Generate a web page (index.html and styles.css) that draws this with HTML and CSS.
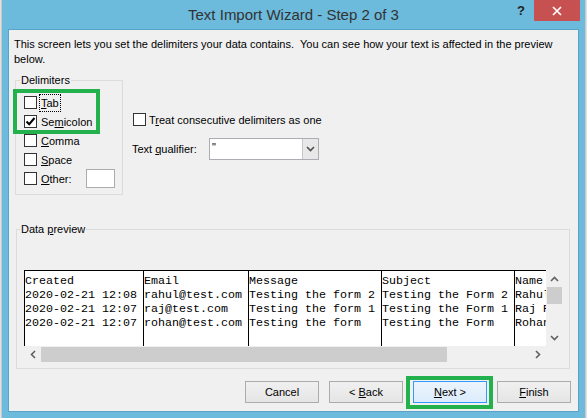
FILE: index.html
```html
<!DOCTYPE html>
<html>
<head>
<meta charset="utf-8">
<title>Text Import Wizard</title>
<link rel="stylesheet" href="styles.css">
</head>
<body>
<div class="screen">
  <div class="edge"></div>
  <div class="window">
    <div class="titlebar">
      <div></div>
      <div class="title">Text Import Wizard - Step 2 of 3</div>
      <div class="caption-btns">
        <span class="help">?</span>
        <span class="close"><svg width="10" height="10" viewBox="0 0 10 10"><path d="M1 1L9 9M9 1L1 9" stroke="#fff" stroke-width="1.7" fill="none"/></svg></span>
      </div>
    </div>
    <div class="frame">
      <div class="client">
        <p class="intro">This screen lets you set the delimiters your data contains.&nbsp; You can see how your text is affected in the preview<br>below.</p>
        <div class="top-row">
          <fieldset class="group delims">
            <legend>Delimiters</legend>
            <div class="hl">
              <div class="row"><span class="cb"></span><span class="lbl focus"><u>T</u>ab</span></div>
              <div class="row"><span class="cb"><svg width="11" height="11" viewBox="0 0 11 11"><path d="M1.5 5.5L4.2 8.2L9.5 2" stroke="#000" stroke-width="2" fill="none"/></svg></span><span class="lbl">Se<u>m</u>icolon</span></div>
            </div>
            <div class="row"><span class="cb"></span><span class="lbl"><u>C</u>omma</span></div>
            <div class="row"><span class="cb"></span><span class="lbl"><u>S</u>pace</span></div>
            <div class="row"><span class="cb"></span><span class="lbl"><u>O</u>ther:</span><span class="textbox"></span></div>
          </fieldset>
          <div class="options">
            <div class="row"><span class="cb"></span><span class="lbl">T<u>r</u>eat consecutive delimiters as one</span></div>
            <div class="qual">
              <span class="qlabel">Text <u>q</u>ualifier:</span>
              <div class="select">
                <span class="val">"</span>
                <span class="dd"><svg width="9" height="6" viewBox="0 0 9 6"><path d="M1 1L4.5 4.5L8 1" stroke="#505050" stroke-width="1.6" fill="none"/></svg></span>
              </div>
            </div>
          </div>
        </div>
        <fieldset class="group preview-group">
          <legend>Data <u>p</u>review</legend>
          <div class="preview">
            <div class="table">
              <div class="col c1">Created
2020-02-21 12:08
2020-02-21 12:07
2020-02-21 12:07</div>
              <div class="col c2">Email
rahul@test.com
raj@test.com
rohan@test.com</div>
              <div class="col c3">Message
Testing the form 2
Testing the form 1
Testing the form</div>
              <div class="col c4">Subject
Testing the Form 2
Testing the Form 1
Testing the Form</div>
              <div class="col c5">Name
Rahul
Raj Rao
Rohan</div>
            </div>
            <div class="vscroll">
              <span class="sbtn"><svg width="9" height="6" viewBox="0 0 9 6"><path d="M1 5L4.5 1.5L8 5" stroke="#606060" stroke-width="1.6" fill="none"/></svg></span>
              <span class="vthumb"></span>
              <span class="vspace"></span>
              <span class="sbtn"><svg width="9" height="6" viewBox="0 0 9 6"><path d="M1 1L4.5 4.5L8 1" stroke="#606060" stroke-width="1.6" fill="none"/></svg></span>
            </div>
            <div class="hscroll">
              <span class="sbtn"><svg width="6" height="9" viewBox="0 0 6 9"><path d="M5 1L1.5 4.5L5 8" stroke="#606060" stroke-width="1.6" fill="none"/></svg></span>
              <span class="hthumb"></span>
              <span class="hspace"></span>
              <span class="sbtn"><svg width="6" height="9" viewBox="0 0 6 9"><path d="M1 1L4.5 4.5L1 8" stroke="#606060" stroke-width="1.6" fill="none"/></svg></span>
            </div>
            <div class="corner"></div>
          </div>
        </fieldset>
        <div class="buttons">
          <button class="btn">Cancel</button>
          <button class="btn">&lt; <u>B</u>ack</button>
          <button class="btn next"><u>N</u>ext &gt;</button>
          <button class="btn"><u>F</u>inish</button>
        </div>
      </div>
    </div>
  </div>
  <div class="edge"></div>
</div>
</body>
</html>
```

FILE: styles.css
```css
* { box-sizing: border-box; }
html, body { margin: 0; padding: 0; }
body {
  width: 587px;
  height: 418px;
  overflow: hidden;
  background: #e1e1e1;
  font-family: "Liberation Sans", Arial, sans-serif;
  font-size: 11px;
  color: #000;
}
.screen { display: flex; height: 418px; }
.edge { width: 2px; flex: none; background: #e1e1e1; border-right: 1px solid #c9c9c9; }
.edge:last-child { border-right: none; border-left: 1px solid #c9c9c9; }
.window {
  width: 583px;
  flex: none;
  background: #6cbadc;
  display: flex;
  flex-direction: column;
}
.titlebar {
  height: 29px;
  display: grid;
  grid-template-columns: 1fr auto 1fr;
  align-items: start;
}
.title {
  font-size: 15px;
  line-height: 29px;
  color: #333;
  white-space: nowrap;
}
.caption-btns { display: flex; justify-content: flex-end; align-items: flex-start; padding-right: 5px; }
.help {
  width: 26px;
  height: 21px;
  line-height: 21px;
  text-align: center;
  font-weight: bold;
  font-size: 13px;
  color: #222;
}
.close {
  width: 46px;
  height: 21px;
  background: #c75050;
  display: flex;
  align-items: center;
  justify-content: center;
}
.frame { flex: 1; padding: 0 6px 6px 6px; display: flex; min-width: 0; }
.client {
  flex: 1;
  min-width: 0;
  overflow: hidden;
  background: #f0f0f0;
  border: 1px solid #5aa2c8;
  display: flex;
  flex-direction: column;
}
.intro {
  margin: 0;
  padding: 7px 0 0 5px;
  line-height: 15px;
  white-space: nowrap;
}
.top-row { display: flex; align-items: flex-start; margin-top: 6px; }
.group {
  border: 1px solid #dcdcdc;
  margin: 0;
  min-width: 0;
}
.group legend {
  padding: 0 1px;
  margin-left: -4px;
  line-height: 15px;
}
.delims {
  margin-left: 6px;
  width: 108px;
  flex: none;
  padding: 5px 7px 6px 8px;
}
.row { display: flex; align-items: center; height: 19px; }
.cb {
  width: 13px;
  height: 13px;
  flex: none;
  background: #fff;
  border: 1px solid #333;
  display: flex;
  align-items: center;
  justify-content: center;
}
.lbl {
  margin-left: 2px;
  padding: 0 1px;
  border: 1px dotted transparent;
  line-height: 16px;
  white-space: nowrap;
}
.lbl.focus { border-color: #000; }
.textbox {
  margin-left: auto;
  width: 29px;
  height: 19px;
  background: #fff;
  border: 1px solid #acacac;
}
.hl { position: relative; }
.hl::after {
  content: "";
  position: absolute;
  top: -4px;
  left: -11px;
  right: 15px;
  bottom: -3px;
  border: 4px solid #22b14c;
}
.options { margin-left: 10px; padding-top: 37px; }
.options .lbl { margin-left: 1px; }
.qual { display: flex; align-items: center; margin-top: 9px; height: 22px; }
.qlabel { width: 77px; margin-left: -1px; white-space: nowrap; }
.select {
  width: 110px;
  height: 22px;
  background: #fff;
  border: 1px solid #abadb3;
  display: flex;
}
.val { flex: 1; padding: 1px 0 0 2px; line-height: 14px; }
.dd {
  width: 16px;
  background: #e8e8e8;
  border-left: 1px solid #c8c8c8;
  display: flex;
  align-items: center;
  justify-content: center;
}
.preview-group {
  margin: 27px 0 0 7px;
  width: 554px;
  padding: 33px 6px 5px 7px;
}
.preview {
  height: 93px;
  display: grid;
  grid-template-columns: 1fr 17px;
  grid-template-rows: 1fr 17px;
}
.table {
  background: #fff;
  border-top: 1px solid #000;
  border-left: 1px solid #000;
  overflow: hidden;
  display: flex;
}
.col {
  flex: none;
  white-space: pre;
  font-family: "Liberation Mono", "Courier New", monospace;
  font-size: 11.67px;
  line-height: 14px;
  padding-top: 3px;
  overflow: hidden;
}
.col + .col { border-left: 1px solid #000; }
.c1 { width: 118px; }
.c2 { width: 105px; }
.c3 { width: 133px; }
.c4 { width: 133px; }
.c5 { width: 60px; }
.vscroll { display: flex; flex-direction: column; background: #f0f0f0; }
.hscroll { display: flex; background: #f0f0f0; }
.sbtn {
  width: 17px;
  height: 17px;
  flex: none;
  display: flex;
  align-items: center;
  justify-content: center;
}
.vthumb { height: 17px; margin: 0 1px; background: #cdcdcd; }
.vspace { flex: 1; }
.hthumb { width: 406px; margin: 1px 0; background: #cdcdcd; }
.hspace { flex: 1; }
.corner { background: #f0f0f0; }
.buttons {
  display: flex;
  justify-content: flex-end;
  gap: 10px;
  margin-top: 12px;
  padding-right: 7px;
}
.btn {
  width: 74px;
  height: 22px;
  padding: 0;
  font-family: "Liberation Sans", Arial, sans-serif;
  font-size: 11px;
  color: #000;
  background: linear-gradient(#f0f0f0, #e5e5e5);
  border: 1px solid #acacac;
  border-radius: 0;
}
.btn.next { position: relative; border-color: #3399ff; background: linear-gradient(#ecf4fc, #dcecfc); }
.btn.next::after {
  content: "";
  position: absolute;
  top: -6px;
  left: -8px;
  right: -7px;
  bottom: -7px;
  border: 4px solid #22b14c;
}
```
